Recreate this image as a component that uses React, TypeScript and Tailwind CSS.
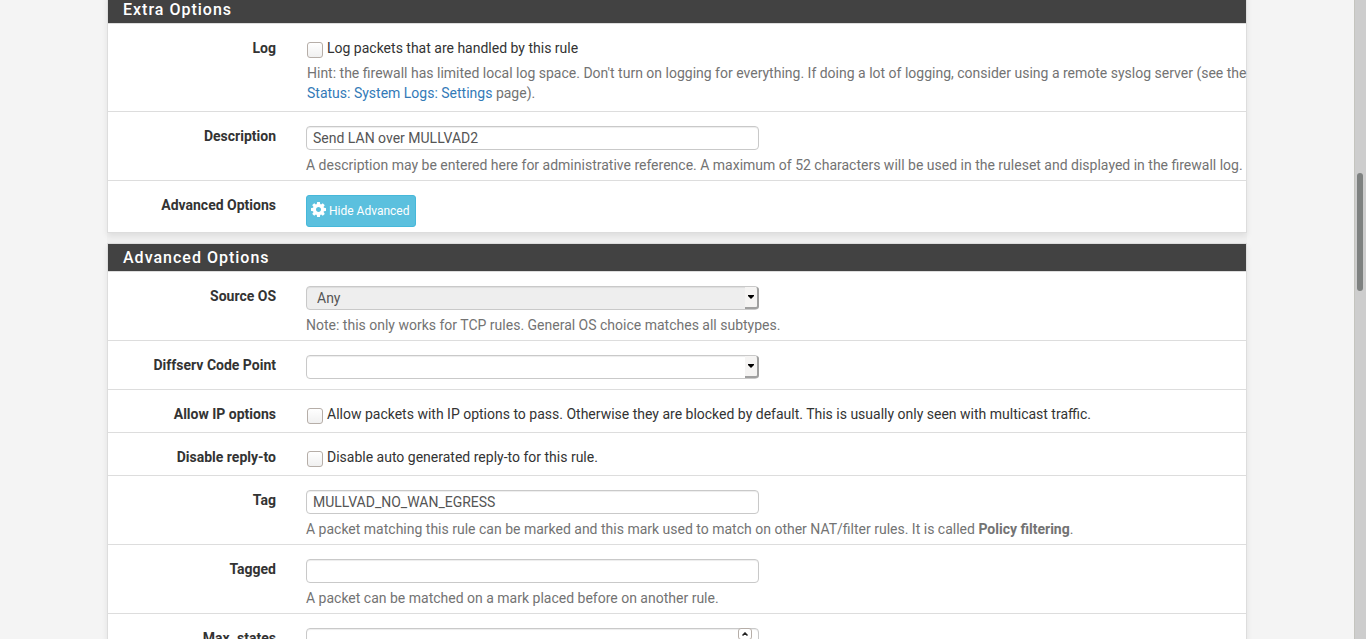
import { useState } from "react";
import type { ReactNode } from "react";

const inputClass =
  "block h-6 w-[453px] max-w-full rounded border border-[#c9c9c9] bg-white px-1.5 text-sm text-[#555] shadow-[inset_0_1px_1px_rgba(0,0,0,0.075)] outline-none";

function Panel({ title, children }: { title: string; children: ReactNode }) {
  return (
    <section className="border border-[#ddd] bg-white shadow-[0_3px_6px_rgba(0,0,0,0.08)]">
      <h2 className="h-7 border-b border-[#ddd] bg-[#424242] bg-clip-padding px-[15px] text-base leading-[27px] font-medium tracking-[1px] text-white">
        {title}
      </h2>
      <div className="divide-y divide-[#ddd]">{children}</div>
    </section>
  );
}

function Row({ label, htmlFor, children }: { label: string; htmlFor: string; children: ReactNode }) {
  return (
    <div className="flex gap-[30px]">
      <label htmlFor={htmlFor} className="w-[168px] shrink-0 pt-3.5 text-right font-bold">
        {label}
      </label>
      <div className="min-w-0 flex-1">{children}</div>
    </div>
  );
}

function Help({ children }: { children: ReactNode }) {
  return <p className="pt-[5px] text-[#737373]">{children}</p>;
}

function Check({ id, text }: { id: string; text: string }) {
  return (
    <label className="flex gap-1 pt-3.5 pl-px">
      <input
        id={id}
        type="checkbox"
        className="mt-1 size-4 shrink-0 appearance-none rounded-[3px] border border-[#b6aea8] bg-linear-to-b from-white to-[#f0f0f0] checked:bg-[#337ab7]"
      />
      <span>{text}</span>
    </label>
  );
}

function Select({ id, options, disabled }: { id: string; options: string[]; disabled?: boolean }) {
  return (
    <div className="relative w-[453px] max-w-full">
      <select
        id={id}
        disabled={disabled}
        className="block h-6 w-full appearance-none rounded border border-[#c9c9c9] bg-white px-2.5 text-sm text-[#555] shadow-[inset_0_1px_1px_rgba(0,0,0,0.075)] outline-none disabled:bg-[#eee] disabled:opacity-100"
      >
        {options.map((o) => (
          <option key={o}>{o}</option>
        ))}
      </select>
      <span className="pointer-events-none absolute inset-y-px right-0 flex w-3.5 items-center justify-center rounded-r-[3px] border-r-2 border-b-2 border-[#a0a0a0] bg-[#f5f4f3]">
        <svg viewBox="0 0 6 4" className="h-1 w-1.5 shrink-0" aria-hidden="true">
          <path d="M0 0h6v1L3 4L0 1z" fill="#000" />
        </svg>
      </span>
    </div>
  );
}

function Cog() {
  return (
    <svg viewBox="128 128 1536 1536" className="mb-[3px] size-[15px]" fill="currentColor" aria-hidden="true">
      <path d="M1152 896q0-106-75-181t-181-75-181 75-75 181 75 181 181 75 181-75 75-181zm512-109v222q0 12-8 23t-20 13l-185 28q-19 54-39 91 35 50 107 138 10 12 10 25t-9 23q-27 37-99 108t-94 71q-12 0-26-9l-138-108q-44 23-91 38-16 136-29 186-7 28-36 28h-222q-14 0-24.5-8.5t-11.5-21.5l-28-184q-49-16-90-37l-141 107q-10 9-25 9-14 0-25-11-126-114-165-168-7-10-7-23 0-12 8-23 15-21 51-66.5t54-70.5q-27-50-41-99l-183-27q-13-2-21-12.5t-8-23.5v-222q0-12 8-23t19-13l186-28q14-46 39-92-40-57-107-138-10-12-10-24 0-10 9-23 26-36 98.5-107.5t94.5-71.5q13 0 26 10l138 107q44-23 91-38 16-136 29-186 7-28 36-28h222q14 0 24.5 8.5t11.5 21.5l28 184q49 16 90 37l142-107q9-9 24-9 13 0 25 10 129 119 165 170 7 8 7 22 0 12-8 23-15 21-51 66.5t-54 70.5q26 50 41 98l183 28q13 2 21 12.5t8 23.5z" />
    </svg>
  );
}

export default function App() {
  const [description, setDescription] = useState("Send LAN over MULLVAD2");
  const [tag, setTag] = useState("MULLVAD_NO_WAN_EGRESS");
  const [tagged, setTagged] = useState("");
  const [maxStates, setMaxStates] = useState("");

  return (
    <div className="flex h-screen overflow-hidden bg-[#f4f4f4] font-['Roboto',sans-serif] text-sm leading-5 text-[#333]">
      <main className="min-w-0 flex-1">
        <form className="mx-auto -mt-[5px] flex max-w-[1140px] flex-col gap-2.5 bg-[#f0f0f0]">
          <Panel title="Extra Options">
            <Row label="Log" htmlFor="log">
              <div className="pb-2">
                <Check id="log" text="Log packets that are handled by this rule" />
                <p className="-mr-0.5 pt-[5px] pl-px text-[#737373]">
                  Hint: the firewall has limited local log space. Don't turn on logging for everything. If doing a lot of
                  logging, consider using a remote syslog server (see the{" "}
                  <a href="#settings" className="text-[#337ab7]">
                    Status: System Logs: Settings
                  </a>{" "}
                  page).
                </p>
              </div>
            </Row>
            <Row label="Description" htmlFor="description">
              <div className="pt-3.5 pb-[5px]">
                <input
                  id="description"
                  type="text"
                  value={description}
                  onChange={(e) => setDescription(e.target.value)}
                  className={inputClass}
                />
                <Help>
                  A description may be entered here for administrative reference. A maximum of 52 characters will be used
                  in the ruleset and displayed in the firewall log.
                </Help>
              </div>
            </Row>
            <Row label="Advanced Options" htmlFor="advanced">
              <div className="pt-3.5 pb-[5px]">
                <button
                  id="advanced"
                  type="button"
                  className="flex h-8 items-center gap-[3px] rounded-[3px] border border-[#46b8da] bg-[#5bc0de] pr-1.5 pl-1 text-xs text-white"
                >
                  <Cog />
                  <span>Hide Advanced</span>
                </button>
              </div>
            </Row>
          </Panel>

          <Panel title="Advanced Options">
            <Row label="Source OS" htmlFor="os">
              <div className="pt-3.5 pb-[5px]">
                <Select id="os" options={["Any"]} disabled />
                <Help>Note: this only works for TCP rules. General OS choice matches all subtypes.</Help>
              </div>
            </Row>
            <Row label="Diffserv Code Point" htmlFor="dscp">
              <div className="pt-3.5 pb-2.5">
                <Select id="dscp" options={[""]} />
              </div>
            </Row>
            <Row label="Allow IP options" htmlFor="allowopts">
              <div className="pb-2">
                <Check
                  id="allowopts"
                  text="Allow packets with IP options to pass. Otherwise they are blocked by default. This is usually only seen with multicast traffic."
                />
              </div>
            </Row>
            <Row label="Disable reply-to" htmlFor="replyto">
              <div className="pb-2">
                <Check id="replyto" text="Disable auto generated reply-to for this rule." />
              </div>
            </Row>
            <Row label="Tag" htmlFor="tag">
              <div className="pt-3.5 pb-[5px]">
                <input
                  id="tag"
                  type="text"
                  value={tag}
                  onChange={(e) => setTag(e.target.value)}
                  className={inputClass}
                />
                <Help>
                  A packet matching this rule can be marked and this mark used to match on other NAT/filter rules. It is
                  called <b className="font-bold">Policy filtering</b>.
                </Help>
              </div>
            </Row>
            <Row label="Tagged" htmlFor="tagged">
              <div className="pt-3.5 pb-[5px]">
                <input
                  id="tagged"
                  type="text"
                  value={tagged}
                  onChange={(e) => setTagged(e.target.value)}
                  className={inputClass}
                />
                <Help>A packet can be matched on a mark placed before on another rule.</Help>
              </div>
            </Row>
            <Row label="Max. states" htmlFor="maxstates">
              <div className="pt-3.5 pb-[5px]">
                <div className="relative w-[453px] max-w-full">
                  <input
                    id="maxstates"
                    type="text"
                    inputMode="numeric"
                    value={maxStates}
                    onChange={(e) => setMaxStates(e.target.value)}
                    className={inputClass}
                  />
                  <button
                    type="button"
                    aria-label="Increase"
                    onClick={() => setMaxStates(String(Number(maxStates) + 1))}
                    className="absolute top-0 right-[7px] flex h-3 w-3.5 items-center justify-center rounded-[3px] border border-[#b6aea8] bg-white"
                  >
                    <svg viewBox="0 0 6 4" className="h-1 w-1.5 shrink-0" aria-hidden="true">
                      <path d="M0.5 3.5L3 1l2.5 2.5" fill="none" stroke="#222" strokeWidth="1.5" />
                    </svg>
                  </button>
                </div>
              </div>
            </Row>
          </Panel>
        </form>
      </main>
      <div className="flex w-3 shrink-0 border-l border-[#c4c4be] bg-[#cdcdcd] pl-0.5">
        <div className="mt-[173px] h-[118px] w-1.5 rounded-full bg-[#7e8180]" />
      </div>
    </div>
  );
}
